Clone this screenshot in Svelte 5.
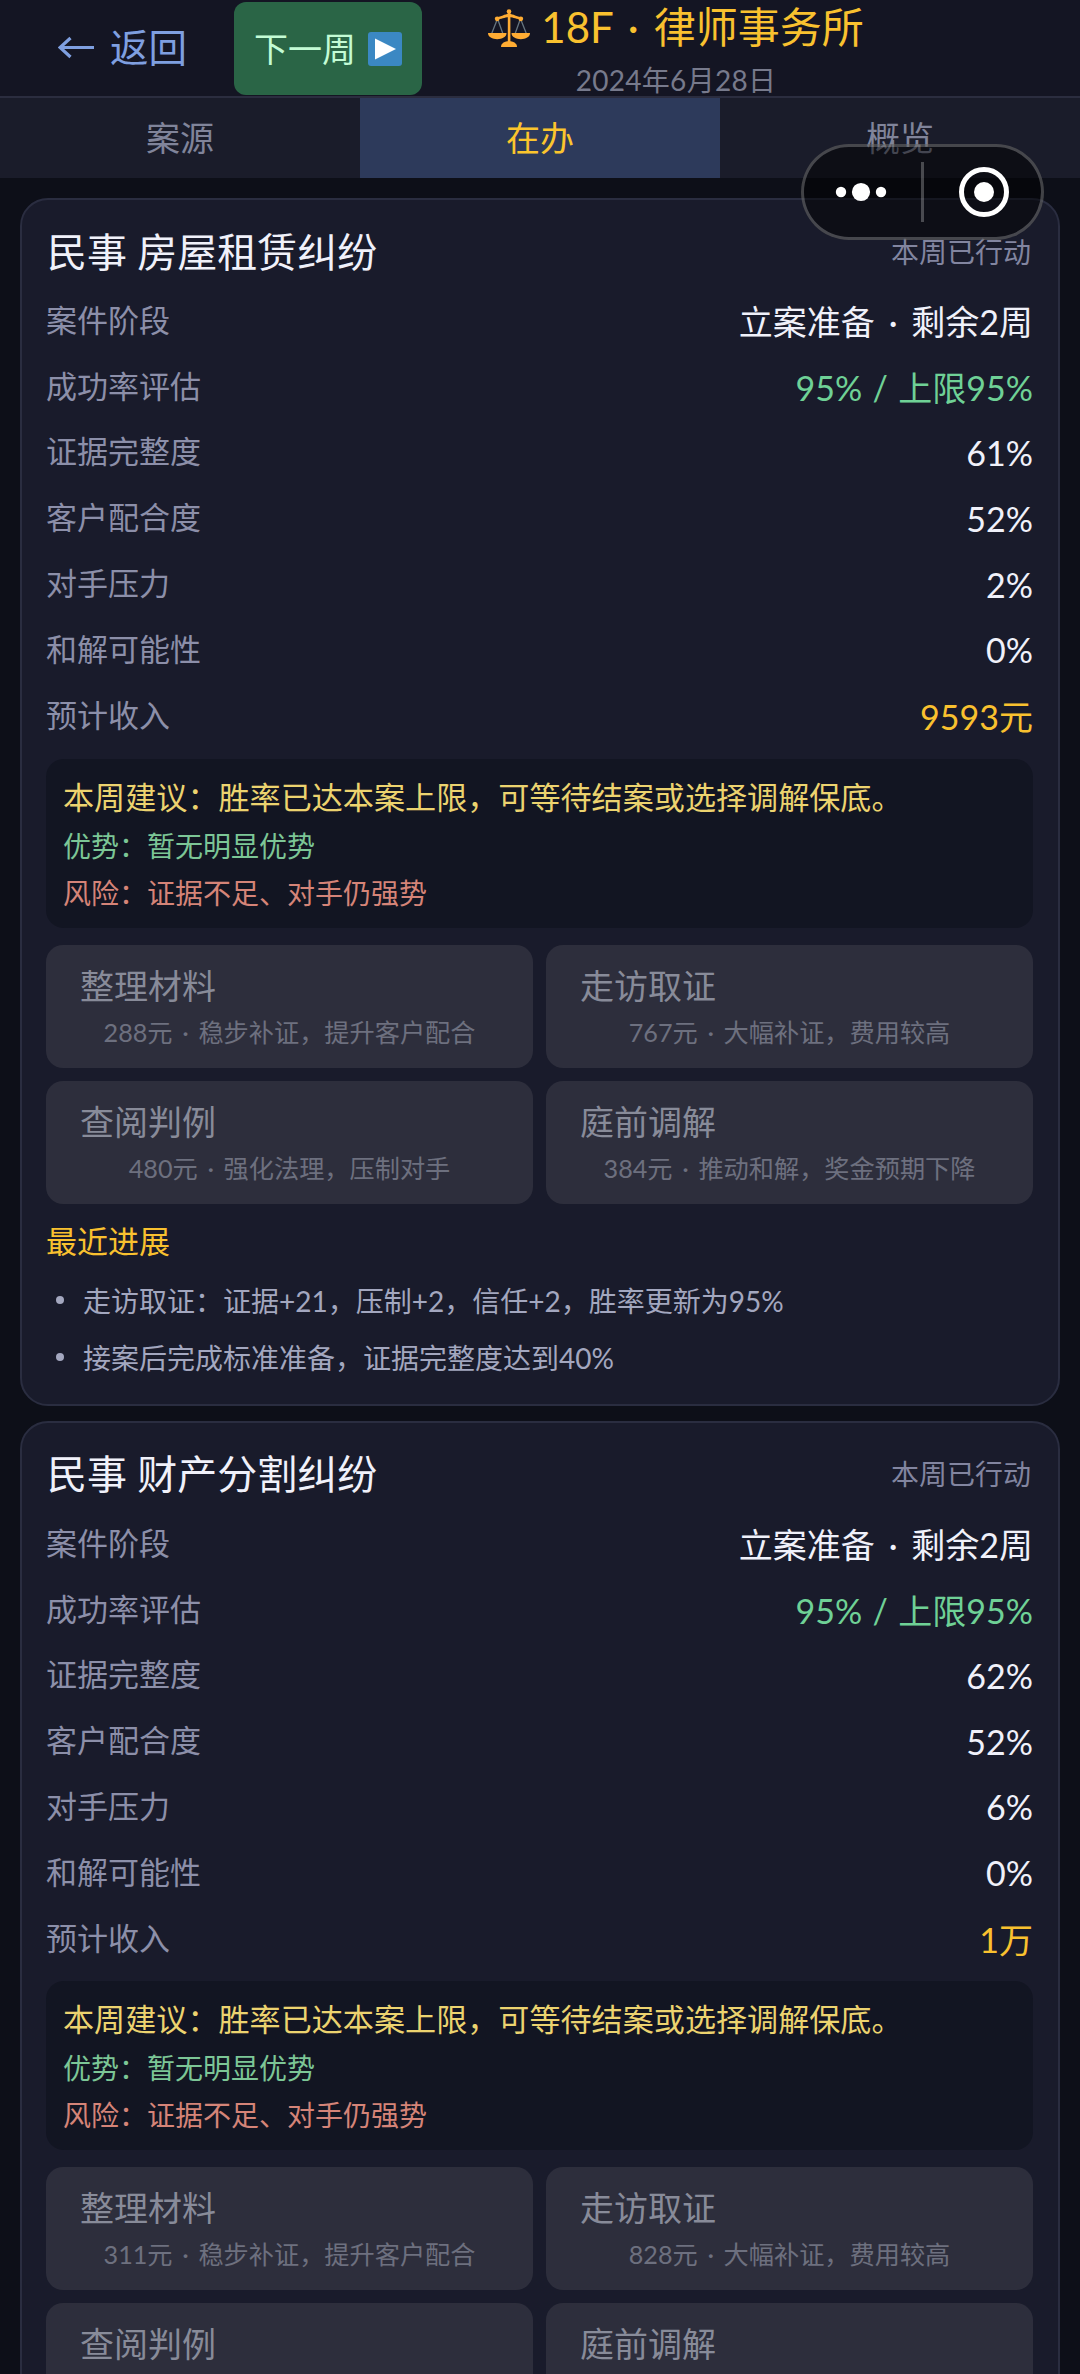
<script lang="ts">
  type Action = { name: string; desc: string };
  type Case = {
    title: string;
    rows: { label: string; value: string; tone?: string }[];
    actions: Action[];
    logs: string[];
  };

  const tabs = ["案源", "在办", "概览"];
  let active = "在办";

  function buildCase(
    title: string,
    evidence: string,
    pressure: string,
    income: string,
    costs: number[],
    logs: string[]
  ): Case {
    return {
      title,
      rows: [
        { label: "案件阶段", value: "立案准备 · 剩余2周" },
        { label: "成功率评估", value: "95% / 上限95%", tone: "good" },
        { label: "证据完整度", value: evidence },
        { label: "客户配合度", value: "52%" },
        { label: "对手压力", value: pressure },
        { label: "和解可能性", value: "0%" },
        { label: "预计收入", value: income, tone: "gold" },
      ],
      actions: [
        { name: "整理材料", desc: `${costs[0]}元 · 稳步补证，提升客户配合` },
        { name: "走访取证", desc: `${costs[1]}元 · 大幅补证，费用较高` },
        { name: "查阅判例", desc: `${costs[2]}元 · 强化法理，压制对手` },
        { name: "庭前调解", desc: `${costs[3]}元 · 推动和解，奖金预期下降` },
      ],
      logs,
    };
  }

  const cases = [
    buildCase("民事 房屋租赁纠纷", "61%", "2%", "9593元", [288, 767, 480, 384], [
      "走访取证：证据+21，压制+2，信任+2，胜率更新为95%",
      "接案后完成标准准备，证据完整度达到40%",
    ]),
    buildCase("民事 财产分割纠纷", "62%", "6%", "1万", [311, 828, 518, 414], [
      "走访取证：证据+22，压制+2，信任+2，胜率更新为95%",
      "接案后完成标准准备，证据完整度达到40%",
    ]),
  ];
</script>

<div class="page">
  <header>
    <button class="back">
      <svg width="37" height="24" viewBox="0 0 37 24">
        <path d="M12.5 2 L2 11.5 L12.5 21 M2 11.5 H36" />
      </svg>
      <span>返回</span>
    </button>
    <button class="next">
      <span>下一周</span>
      <svg width="34" height="34" viewBox="0 0 34 34">
        <rect width="34" height="34" rx="3" fill="#3b88c3" />
        <path d="M7 6.5 L28 17 L7 27.5 Z" fill="#fff" />
      </svg>
    </button>
    <div class="heading">
      <h1>
        <svg width="42" height="38" viewBox="0 0 42 38">
          <g fill="none" stroke="#66757f" stroke-width="1.3">
            <path d="M9 11 L3.5 25 M10 11 L15 25 M32 11 L27 25 M33 11 L38.5 25" />
          </g>
          <g fill="#ffac33">
            <circle cx="21" cy="2.5" r="2.3" />
            <rect x="19.8" y="3" width="2.6" height="31" />
            <circle cx="9.2" cy="9.8" r="2.4" />
            <circle cx="32.8" cy="9.8" r="2.4" />
            <path d="M8 8.5 C14 7.5 16 5 21 5 S28 7.5 34 8.5 V10.5 C28 10.5 26 8.3 21 8.3 S14 10.5 8 10.5 Z" />
            <path d="M0 24 H18.5 C18.5 28 14 30.2 9.2 30.2 S0 28 0 24 Z" />
            <path d="M23.5 24 H42 C42 28 37.6 30.2 32.8 30.2 S23.5 28 23.5 24 Z" />
            <path d="M13 38 C13 34 17 32.3 21 32.3 S29 34 29 38 Z" />
          </g>
        </svg>
        <span>18F · 律师事务所</span>
      </h1>
      <div class="date">2024年6月28日</div>
    </div>
  </header>

  <nav>
    {#each tabs as tab}
      <button class="tab" class:active={tab === active} on:click={() => (active = tab)}>{tab}</button>
    {/each}
  </nav>

  <main>
    {#each cases as item}
      <section class="card">
        <div class="card-head">
          <h2>{item.title}</h2>
          <span class="status">本周已行动</span>
        </div>

        {#each item.rows as row}
          <div class="row">
            <span class="label">{row.label}</span>
            <span class="value {row.tone ?? ''}">{row.value}</span>
          </div>
        {/each}

        <div class="advice">
          <p class="tip">本周建议：胜率已达本案上限，可等待结案或选择调解保底。</p>
          <p class="pros">优势：暂无明显优势</p>
          <p class="cons">风险：证据不足、对手仍强势</p>
        </div>

        <div class="actions">
          {#each item.actions as action}
            <button class="action" disabled>
              <span class="name">{action.name}</span>
              <span class="desc">{action.desc}</span>
            </button>
          {/each}
        </div>

        <h3>最近进展</h3>
        <ul>
          {#each item.logs as log}
            <li>{log}</li>
          {/each}
        </ul>
      </section>
    {/each}
  </main>

  <div class="capsule">
    <svg width="242" height="96" viewBox="0 0 242 96">
      <g fill="#fff">
        <circle cx="40" cy="48" r="5.2" />
        <circle cx="60" cy="48" r="9.1" />
        <circle cx="80" cy="48" r="5.2" />
        <circle cx="183" cy="48" r="10" />
      </g>
      <rect x="120" y="18" width="3" height="60" fill="#fff" opacity="0.25" />
      <circle cx="183" cy="48" r="22.5" fill="none" stroke="#fff" stroke-width="5" />
    </svg>
  </div>
</div>

<style>
  :global(body) {
    background: #0d0f18;
  }
  .page {
    position: relative;
    width: 1080px;
    height: 2374px;
    overflow: hidden;
    background: #0d0f18;
    color: #f0f1fa;
    font-family: Lato, "Noto Sans CJK SC", sans-serif;
  }
  button {
    border: none;
    margin: 0;
    padding: 0;
    font-family: inherit;
  }
  h1,
  h2,
  h3,
  p,
  ul {
    margin: 0;
    padding: 0;
    font-weight: 400;
  }

  header {
    display: flex;
    height: 96px;
    border-bottom: 2px solid #2b2d3f;
    background: #141523;
  }
  .back {
    display: flex;
    align-items: center;
    gap: 15px;
    width: 234px;
    padding-left: 58px;
    background: none;
    color: #7f9fe0;
    font-size: 38.5px;
    line-height: 90px;
  }
  .back span {
    padding-bottom: 3px;
  }
  .back svg {
    fill: none;
    stroke: #7f9fe0;
    stroke-width: 3.2;
  }
  .next {
    display: flex;
    align-items: center;
    justify-content: center;
    gap: 12px;
    width: 188px;
    height: 93px;
    margin-top: 2px;
    border-radius: 12px;
    background: #2a6546;
    color: #c3fbd5;
    font-size: 34px;
  }
  .next span {
    padding-bottom: 3px;
  }
  .heading {
    width: 508px;
    text-align: center;
  }
  h1 {
    display: flex;
    justify-content: center;
    gap: 11px;
    color: #f9c12f;
    font-size: 42px;
    line-height: 54px;
    word-spacing: 0.1em;
  }
  h1 svg {
    margin-top: 9px;
  }
  .date {
    color: #777a8c;
    font-size: 28px;
    line-height: 53px;
    letter-spacing: 0.3px;
  }

  nav {
    display: grid;
    grid-template-columns: repeat(3, 1fr);
    height: 80px;
  }
  .tab {
    padding-bottom: 4px;
    background: #1a1c2a;
    color: #80849a;
    font-size: 34px;
  }
  .tab.active {
    background: #2d3a5b;
    color: #fbc52d;
  }

  main {
    display: flex;
    flex-direction: column;
    gap: 15.3px;
    padding: 20px 20px 0;
  }
  .card {
    padding: 22px 25px 18px 24px;
    border: 2px solid #2a2d40;
    border-radius: 28px;
    background: #191b2b;
  }
  .card-head {
    display: flex;
    justify-content: space-between;
    align-items: center;
    height: 55px;
    margin-bottom: 9px;
  }
  h2 {
    padding-left: 1px;
    font-size: 40px;
  }
  .status {
    padding: 2px 2px 0 0;
    color: #8285a0;
    font-size: 28px;
  }
  .row {
    display: flex;
    justify-content: space-between;
    align-items: center;
    height: 65.8px;
  }
  .label {
    padding-bottom: 1px;
    color: #8c8fa9;
    font-size: 31px;
  }
  .value {
    padding-top: 4px;
    font-size: 34px;
    word-spacing: 0.15em;
  }
  .value.good {
    color: #6fd196;
    word-spacing: 0.05em;
  }
  .value.gold {
    color: #f9c12f;
  }

  .advice {
    height: 145px;
    margin-top: 12px;
    padding: 13px 17px 11px;
    border-radius: 18px;
    background: #121522;
    font-size: 28px;
  }
  .tip {
    color: #ecd36f;
    font-size: 31.1px;
    line-height: 50px;
  }
  .pros {
    color: #7cc696;
    line-height: 48px;
  }
  .cons {
    color: #d58478;
    line-height: 47px;
  }

  .actions {
    display: grid;
    grid-template-columns: 1fr 1fr;
    gap: 13px;
    margin-top: 17px;
  }
  .action {
    display: flex;
    flex-direction: column;
    height: 123px;
    padding: 17px 34px 12px;
    border-radius: 17px;
    background: #2d2e3c;
    word-spacing: 0.24em;
  }
  .name {
    color: #888b99;
    font-size: 34px;
    line-height: 48px;
    text-align: left;
  }
  .desc {
    color: #6d707f;
    font-size: 25.2px;
    line-height: 45px;
    white-space: nowrap;
    text-align: center;
  }

  h3 {
    margin: 12px 0 6px;
    color: #f9c12f;
    font-size: 31px;
    line-height: 50px;
  }
  ul {
    list-style: none;
  }
  li {
    display: flex;
    align-items: center;
    gap: 19px;
    height: 57px;
    padding-left: 10px;
    color: #a3a7bf;
    font-size: 28px;
  }
  li::before {
    content: "";
    width: 8px;
    height: 8px;
    border-radius: 50%;
    background: #a3a7bf;
  }

  /* floats over the page like the host app's own menu */
  .capsule {
    position: absolute;
    top: 144px;
    left: 801px;
    box-sizing: border-box;
    width: 243px;
    height: 96px;
    border-radius: 48px;
    background: rgba(0, 0, 0, 0.48);
    box-shadow: inset 0 0 0 3px rgba(255, 255, 255, 0.24);
  }
  .capsule svg {
    display: block;
  }
</style>
